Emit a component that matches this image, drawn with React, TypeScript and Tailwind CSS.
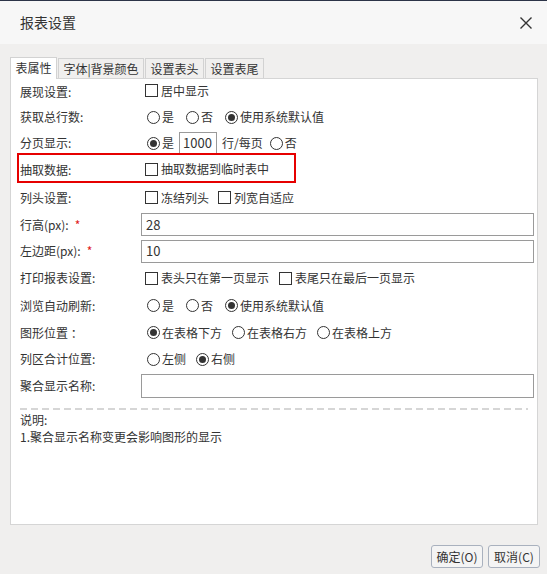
import React from "react";

function Radio({ checked = false }: { checked?: boolean }) {
  return (
    <span className="ml-[2px] mr-[2px] inline-flex h-[13px] w-[13px] shrink-0 items-center justify-center rounded-full border border-[#333] bg-white">
      {checked && <span className="h-[7px] w-[7px] rounded-full bg-[#333]" />}
    </span>
  );
}

function Check() {
  return <span className="mr-[3px] inline-block h-[13px] w-[13px] shrink-0 border border-[#333] bg-white" />;
}

function Opt({ kind, checked, label }: { kind: "radio" | "check"; checked?: boolean; label: string }) {
  return (
    <span className="inline-flex items-center">
      {kind === "radio" ? <Radio checked={checked} /> : <Check />}
      <span>{label}</span>
    </span>
  );
}

function Row({ label, h, children, req }: { label: string; h: string; children?: React.ReactNode; req?: boolean }) {
  return (
    <div className={`flex items-center ${h}`}>
      <div className="w-[130px] shrink-0 pl-[9px]">
        {label}
        {req && <span className="ml-[6px] text-[#e02020]">*</span>}
      </div>
      <div className="flex flex-1 items-center pr-[3px]">{children}</div>
    </div>
  );
}

export default function App() {
  return (
    <div className="flex h-[574px] w-[547px] flex-col border-t border-[#2c3448] bg-[#f0efee] font-['Noto_Sans_CJK_SC',sans-serif] text-[12px] text-[#333]">
      {/* title bar */}
      <div className="flex h-[43px] shrink-0 items-center justify-between bg-[#f7f7f7] pl-[20px] pr-[14px]">
        <span className="text-[14px] text-[#333]">报表设置</span>
        <svg width="14" height="14" viewBox="0 0 14 14" className="mt-[1px]">
          <path d="M1.5 1.5 L12.5 12.5 M12.5 1.5 L1.5 12.5" stroke="#333" strokeWidth="1.4" />
        </svg>
      </div>

      {/* tabs */}
      <div className="flex items-end gap-[1px] px-[10px] pt-[13px]">
        <div className="relative z-10 -mb-px flex h-[22px] w-[47px] items-center justify-center border border-b-0 border-[#d2d2d2] bg-white pb-[1px]">
          表属性
        </div>
        <div className="flex h-[20px] w-[86px] items-center justify-center border border-b-0 border-[#d2d2d2]">字体|背景颜色</div>
        <div className="flex h-[20px] w-[59px] items-center justify-center border border-b-0 border-[#d2d2d2]">设置表头</div>
        <div className="flex h-[20px] w-[59px] items-center justify-center border border-b-0 border-[#d2d2d2]">设置表尾</div>
      </div>

      {/* panel */}
      <div className="mx-[10px] flex h-[447px] w-[528px] flex-col border border-[#d5d5d5] bg-white">
        <Row label="展现设置:" h="h-[25px]">
          <span className="pl-[4px]">
            <Opt kind="check" label="居中显示" />
          </span>
        </Row>
        <Row label="获取总行数:" h="h-[26px]">
          <div className="flex items-center gap-[10px] pl-[4px]">
            <Opt kind="radio" label="是" />
            <Opt kind="radio" label="否" />
            <Opt kind="radio" checked label="使用系统默认值" />
          </div>
        </Row>
        <Row label="分页显示:" h="h-[26px]">
          <div className="flex items-center gap-[5px] pl-[4px]">
            <Opt kind="radio" checked label="是" />
            <div className="flex h-[22px] w-[38px] items-center border border-[#9a9a9a] pl-[3px] text-[13px]">1000</div>
            <span>行/每页</span>
            <Opt kind="radio" label="否" />
          </div>
        </Row>
        <div className="relative">
          <Row label="抽取数据:" h="h-[28px]">
            <span className="pl-[4px]">
              <Opt kind="check" label="抽取数据到临时表中" />
            </span>
          </Row>
          <div className="absolute left-[6px] top-[-3px] h-[30px] w-[279px] border-2 border-[#e60000]" />
        </div>
        <Row label="列头设置:" h="h-[27px]">
          <div className="flex items-center gap-[9px] pl-[4px]">
            <Opt kind="check" label="冻结列头" />
            <Opt kind="check" label="列宽自适应" />
          </div>
        </Row>
        <Row label="行高(px):" req h="h-[27px]">
          <div className="flex h-[23px] flex-1 items-center border border-[#9a9a9a] pl-[4px] text-[13px]">28</div>
        </Row>
        <Row label="左边距(px):" req h="h-[26px]">
          <div className="flex h-[23px] flex-1 items-center border border-[#9a9a9a] pl-[4px] text-[13px]">10</div>
        </Row>
        <Row label="打印报表设置:" h="h-[28px]">
          <div className="flex items-center gap-[10px] pl-[4px]">
            <Opt kind="check" label="表头只在第一页显示" />
            <Opt kind="check" label="表尾只在最后一页显示" />
          </div>
        </Row>
        <Row label="浏览自动刷新:" h="h-[27px]">
          <div className="flex items-center gap-[10px] pl-[4px]">
            <Opt kind="radio" label="是" />
            <Opt kind="radio" label="否" />
            <Opt kind="radio" checked label="使用系统默认值" />
          </div>
        </Row>
        <Row label="图形位置 ：" h="h-[27px]">
          <div className="flex items-center gap-[8px] pl-[4px]">
            <Opt kind="radio" checked label="在表格下方" />
            <Opt kind="radio" label="在表格右方" />
            <Opt kind="radio" label="在表格上方" />
          </div>
        </Row>
        <Row label="列区合计位置:" h="h-[26px]">
          <div className="flex items-center gap-[8px] pl-[4px]">
            <Opt kind="radio" label="左侧" />
            <Opt kind="radio" checked label="右侧" />
          </div>
        </Row>
        <Row label="聚合显示名称:" h="h-[28px]">
          <div className="h-[24px] flex-1 border border-[#9a9a9a]" />
        </Row>
        <div className="mx-[9px] mt-[8px] h-[2px] bg-[repeating-linear-gradient(90deg,#d6d6d6_0_7px,transparent_7px_11px)]" />
        <div className="pl-[9px] pt-[1px] leading-[17px]">
          <div>说明:</div>
          <div>1.聚合显示名称变更会影响图形的显示</div>
        </div>
      </div>

      {/* footer */}
      <div className="flex justify-end gap-[5px] pr-[7px] pt-[20px]">
        <button className="flex h-[23px] w-[52px] items-center justify-center rounded-[3px] border border-[#a9b1be] bg-[#f4f4f4] text-[12px] text-[#333]">
          确定(O)
        </button>
        <button className="flex h-[23px] w-[52px] items-center justify-center rounded-[3px] border border-[#a9b1be] bg-[#f4f4f4] text-[12px] text-[#333]">
          取消(C)
        </button>
      </div>
    </div>
  );
}
